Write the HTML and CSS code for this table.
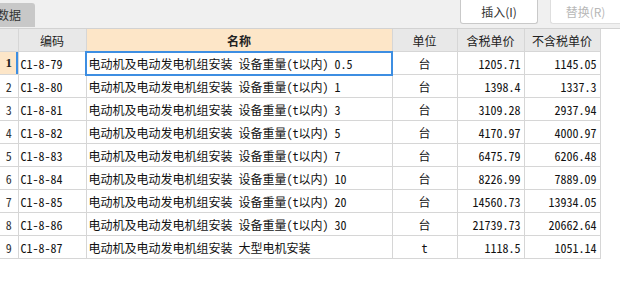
FILE: index.html
```html
<!DOCTYPE html>
<html lang="zh-CN">
<head>
<meta charset="utf-8">
<title>数据</title>
<link rel="stylesheet" href="styles.css">
</head>
<body>
<div class="toolbar">
  <div class="tab">数据</div>
  <div class="actions">
    <button class="btn">插入(I)</button>
    <button class="btn disabled">替换(R)</button>
  </div>
</div>
<table class="grid">
  <colgroup>
    <col class="c-num"><col class="c-code"><col class="c-name"><col class="c-unit"><col class="c-tax"><col class="c-notax">
  </colgroup>
  <thead>
    <tr>
      <th></th><th>编码</th><th class="hl">名称</th><th>单位</th><th>含税单价</th><th>不含税单价</th>
    </tr>
  </thead>
  <tbody>
    <tr class="cur"><td class="num">1</td><td>C1-8-79</td><td class="name sel">电动机及电动发电机组安装 设备重量(t以内) 0.5</td><td class="unit">台</td><td class="price">1205.71</td><td class="price">1145.05</td></tr>
    <tr><td class="num">2</td><td>C1-8-80</td><td class="name">电动机及电动发电机组安装 设备重量(t以内) 1</td><td class="unit">台</td><td class="price">1398.4</td><td class="price">1337.3</td></tr>
    <tr><td class="num">3</td><td>C1-8-81</td><td class="name">电动机及电动发电机组安装 设备重量(t以内) 3</td><td class="unit">台</td><td class="price">3109.28</td><td class="price">2937.94</td></tr>
    <tr><td class="num">4</td><td>C1-8-82</td><td class="name">电动机及电动发电机组安装 设备重量(t以内) 5</td><td class="unit">台</td><td class="price">4170.97</td><td class="price">4000.97</td></tr>
    <tr><td class="num">5</td><td>C1-8-83</td><td class="name">电动机及电动发电机组安装 设备重量(t以内) 7</td><td class="unit">台</td><td class="price">6475.79</td><td class="price">6206.48</td></tr>
    <tr><td class="num">6</td><td>C1-8-84</td><td class="name">电动机及电动发电机组安装 设备重量(t以内) 10</td><td class="unit">台</td><td class="price">8226.99</td><td class="price">7889.09</td></tr>
    <tr><td class="num">7</td><td>C1-8-85</td><td class="name">电动机及电动发电机组安装 设备重量(t以内) 20</td><td class="unit">台</td><td class="price">14560.73</td><td class="price">13934.05</td></tr>
    <tr><td class="num">8</td><td>C1-8-86</td><td class="name">电动机及电动发电机组安装 设备重量(t以内) 30</td><td class="unit">台</td><td class="price">21739.73</td><td class="price">20662.64</td></tr>
    <tr><td class="num">9</td><td>C1-8-87</td><td class="name">电动机及电动发电机组安装 大型电机安装</td><td class="unit">t</td><td class="price">1118.5</td><td class="price">1051.14</td></tr>
  </tbody>
</table>
</body>
</html>
```
FILE: styles.css
```css
html, body {
  margin: 0;
  padding: 0;
  background: #ffffff;
  width: 620px;
  height: 303px;
  overflow: hidden;
}
body {
  font-family: "Noto Sans Mono CJK SC", "Liberation Mono", "Noto Sans CJK SC", monospace;
  font-size: 12px;
  color: #111;
}
.toolbar {
  height: 28px;
  background: #f0f0f0;
  border-bottom: 1px solid #d2d2d2;
  display: flex;
  align-items: flex-start;
  overflow: hidden;
}
.tab {
  margin-top: 3px;
  height: 24px;
  width: 35px;
  background: #c8c8c8;
  border-radius: 0 3px 0 0;
  font-family: "Noto Sans CJK SC", sans-serif;
  font-size: 12px;
  line-height: 24px;
  color: #333;
  text-indent: -3px;
  overflow: hidden;
  white-space: nowrap;
}
.actions {
  margin-left: auto;
  display: flex;
  gap: 12px;
}
.btn {
  height: 24px;
  width: 78px;
  padding: 0;
  margin: 0;
  background: #ffffff;
  border: 1px solid #c9c9c9;
  border-top: none;
  border-radius: 0 0 3px 3px;
  font-family: "Noto Sans CJK SC", sans-serif;
  font-size: 12px;
  color: #333;
}
.btn.disabled {
  width: 70px;
  color: #b8b8b8;
  border-color: #dedede;
  border-right: none;
  border-radius: 0 0 0 3px;
}
.grid {
  border-collapse: collapse;
  table-layout: fixed;
  width: 600px;
}
.c-num { width: 18px; }
.c-code { width: 68px; }
.c-name { width: 306px; }
.c-unit { width: 65px; }
.c-tax { width: 67px; }
.c-notax { width: 76px; }
.grid th, .grid td {
  border: 1px solid #d6d6d6;
  padding: 0 2px;
  height: 22px;
  white-space: nowrap;
  overflow: hidden;
}
.grid tr:first-child th { border-top: none; }
.grid th:first-child, .grid td:first-child { border-left: none; }
.grid th {
  background: #e8e8e8;
  font-family: "Noto Sans CJK SC", sans-serif;
  font-weight: normal;
  font-size: 12px;
  color: #222;
  text-align: center;
  height: 22px;
}
.grid th.hl {
  background: #fde6c8;
  font-weight: bold;
}
.grid td.num {
  text-align: center;
  padding: 0;
  color: #333;
  font-family: "Noto Sans Mono CJK SC", "Liberation Mono", monospace;
}
.grid tr.cur td.num {
  background: #fde6c8;
  font-family: "Liberation Serif", serif;
  font-weight: bold;
  font-size: 13px;
  color: #222;
  box-shadow: inset -2px 0 0 #3d8ee2;
}
.grid td.unit { text-align: center; }
.grid td.price { text-align: right; padding-right: 3px; }
.grid td.sel {
  outline: 2px solid #3d8ee2;
  outline-offset: -1px;
}
```
